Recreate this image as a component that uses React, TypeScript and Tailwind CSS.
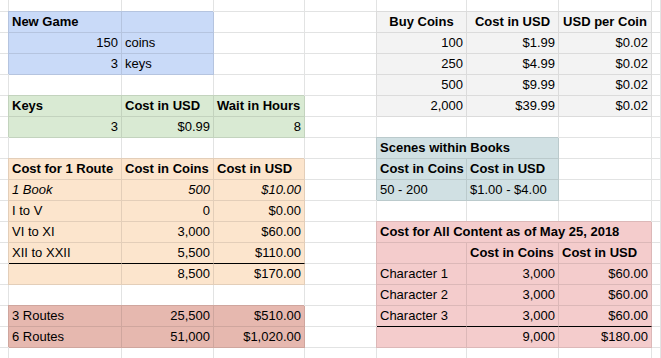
import React from "react";

type Cell = {
  c: string;
  t?: string;
  a?: "r" | "c";
  b?: boolean;
  i?: boolean;
  span?: 2 | 3;
};

const W = "bg-white border-[#e2e3e3]";
const BLUE = "bg-[#c9daf8] border-[#b5c4df] shadow-[-1px_-1px_0_#b5c4df]";
const GREEN = "bg-[#d9ead3] border-[#c3d3be] shadow-[-1px_-1px_0_#c3d3be]";
const ORANGE = "bg-[#fce5cd] border-[#e3ceb9] shadow-[-1px_-1px_0_#e3ceb9]";
const ORANGE_BLK = "bg-[#fce5cd] border-r-[#e3ceb9] border-b-black shadow-[-1px_-1px_0_#e3ceb9]";
const ORANGE_TOP = "bg-[#fce5cd] border-[#e3ceb9] shadow-[-1px_0_0_#e3ceb9]";
const ROUTE = "bg-[#e6b8af] border-[#cfa69e] shadow-[-1px_-1px_0_#cfa69e]";
const GRAY = "bg-[#f3f3f3] border-[#dbdbdb] shadow-[-1px_-1px_0_#dbdbdb]";
const TEAL = "bg-[#d0e0e3] border-[#bbcacc] shadow-[-1px_-1px_0_#bbcacc]";
const PINK = "bg-[#f4cccc] border-[#dcb8b8] shadow-[-1px_-1px_0_#dcb8b8]";
const PINK_BLK = "bg-[#f4cccc] border-r-[#dcb8b8] border-b-black shadow-[-1px_-1px_0_#dcb8b8]";
const PINK_TOP = "bg-[#f4cccc] border-[#dcb8b8] shadow-[-1px_0_0_#dcb8b8]";

const w = (): Cell => ({ c: W });
const blankRow = (): Cell[] => Array.from({ length: 9 }, w);

const rows: Cell[][] = [
  blankRow(),
  [w(), { c: BLUE, t: "New Game", b: true }, { c: BLUE }, w(), w(),
    { c: GRAY, t: "Buy Coins", b: true, a: "c" }, { c: GRAY, t: "Cost in USD", b: true, a: "c" }, { c: GRAY, t: "USD per Coin", b: true, a: "c" }, w()],
  [w(), { c: BLUE, t: "150", a: "r" }, { c: BLUE, t: "coins" }, w(), w(),
    { c: GRAY, t: "100", a: "r" }, { c: GRAY, t: "$1.99", a: "r" }, { c: GRAY, t: "$0.02", a: "r" }, w()],
  [w(), { c: BLUE, t: "3", a: "r" }, { c: BLUE, t: "keys" }, w(), w(),
    { c: GRAY, t: "250", a: "r" }, { c: GRAY, t: "$4.99", a: "r" }, { c: GRAY, t: "$0.02", a: "r" }, w()],
  [w(), w(), w(), w(), w(),
    { c: GRAY, t: "500", a: "r" }, { c: GRAY, t: "$9.99", a: "r" }, { c: GRAY, t: "$0.02", a: "r" }, w()],
  [w(), { c: GREEN, t: "Keys", b: true }, { c: GREEN, t: "Cost in USD", b: true }, { c: GREEN, t: "Wait in Hours", b: true }, w(),
    { c: GRAY, t: "2,000", a: "r" }, { c: GRAY, t: "$39.99", a: "r" }, { c: GRAY, t: "$0.02", a: "r" }, w()],
  [w(), { c: GREEN, t: "3", a: "r" }, { c: GREEN, t: "$0.99", a: "r" }, { c: GREEN, t: "8", a: "r" }, w(), w(), w(), w(), w()],
  [w(), w(), w(), w(), w(), { c: TEAL, t: "Scenes within Books", b: true, span: 2 }, w(), w()],
  [w(), { c: ORANGE, t: "Cost for 1 Route", b: true }, { c: ORANGE, t: "Cost in Coins", b: true }, { c: ORANGE, t: "Cost in USD", b: true }, w(),
    { c: TEAL, t: "Cost in Coins", b: true }, { c: TEAL, t: "Cost in USD", b: true }, w(), w()],
  [w(), { c: ORANGE, t: "1 Book", i: true }, { c: ORANGE, t: "500", a: "r", i: true }, { c: ORANGE, t: "$10.00", a: "r", i: true }, w(),
    { c: TEAL, t: "50 - 200" }, { c: TEAL, t: "$1.00 - $4.00" }, w(), w()],
  [w(), { c: ORANGE, t: "I to V" }, { c: ORANGE, t: "0", a: "r" }, { c: ORANGE, t: "$0.00", a: "r" }, w(), w(), w(), w(), w()],
  [w(), { c: ORANGE, t: "VI to XI" }, { c: ORANGE, t: "3,000", a: "r" }, { c: ORANGE, t: "$60.00", a: "r" }, w(),
    { c: PINK, t: "Cost for All Content as of May 25, 2018", b: true, span: 3 }, w()],
  [w(), { c: ORANGE_BLK, t: "XII to XXII" }, { c: ORANGE_BLK, t: "5,500", a: "r" }, { c: ORANGE_BLK, t: "$110.00", a: "r" }, w(),
    { c: PINK }, { c: PINK, t: "Cost in Coins", b: true }, { c: PINK, t: "Cost in USD", b: true }, w()],
  [w(), { c: ORANGE_TOP }, { c: ORANGE_TOP, t: "8,500", a: "r" }, { c: ORANGE_TOP, t: "$170.00", a: "r" }, w(),
    { c: PINK, t: "Character 1" }, { c: PINK, t: "3,000", a: "r" }, { c: PINK, t: "$60.00", a: "r" }, w()],
  [w(), w(), w(), w(), w(),
    { c: PINK, t: "Character 2" }, { c: PINK, t: "3,000", a: "r" }, { c: PINK, t: "$60.00", a: "r" }, w()],
  [w(), { c: ROUTE, t: "3 Routes" }, { c: ROUTE, t: "25,500", a: "r" }, { c: ROUTE, t: "$510.00", a: "r" }, w(),
    { c: PINK_BLK, t: "Character 3" }, { c: PINK_BLK, t: "3,000", a: "r" }, { c: PINK_BLK, t: "$60.00", a: "r" }, w()],
  [w(), { c: ROUTE, t: "6 Routes" }, { c: ROUTE, t: "51,000", a: "r" }, { c: ROUTE, t: "$1,020.00", a: "r" }, w(),
    { c: PINK_TOP }, { c: PINK_TOP, t: "9,000", a: "r" }, { c: PINK_TOP, t: "$180.00", a: "r" }, w()],
  blankRow(),
];

function CellView({ cell }: { cell: Cell }) {
  const cls = [
    "border-r border-b box-border px-[3px] text-[13px] leading-[20px] whitespace-nowrap overflow-hidden text-black",
    cell.c,
    cell.a === "r" ? "text-right" : cell.a === "c" ? "text-center" : "text-left",
    cell.b ? "font-bold" : "font-normal",
    cell.i ? "italic" : "",
    cell.span === 2 ? "col-span-2" : cell.span === 3 ? "col-span-3" : "",
  ].join(" ");
  return <div className={cls}>{cell.t ?? ""}</div>;
}

export default function App() {
  return (
    <div className="w-[661px] h-[358px] overflow-hidden bg-white font-['Liberation_Sans',Arial,sans-serif]">
      <div className="grid grid-cols-[9px_113px_92px_91px_72px_90px_92px_93px_1fr] grid-rows-[12px_repeat(17,21px)]">
        {rows.map((r, ri) =>
          r.map((cell, ci) => <CellView key={`${ri}-${ci}`} cell={cell} />)
        )}
      </div>
    </div>
  );
}
